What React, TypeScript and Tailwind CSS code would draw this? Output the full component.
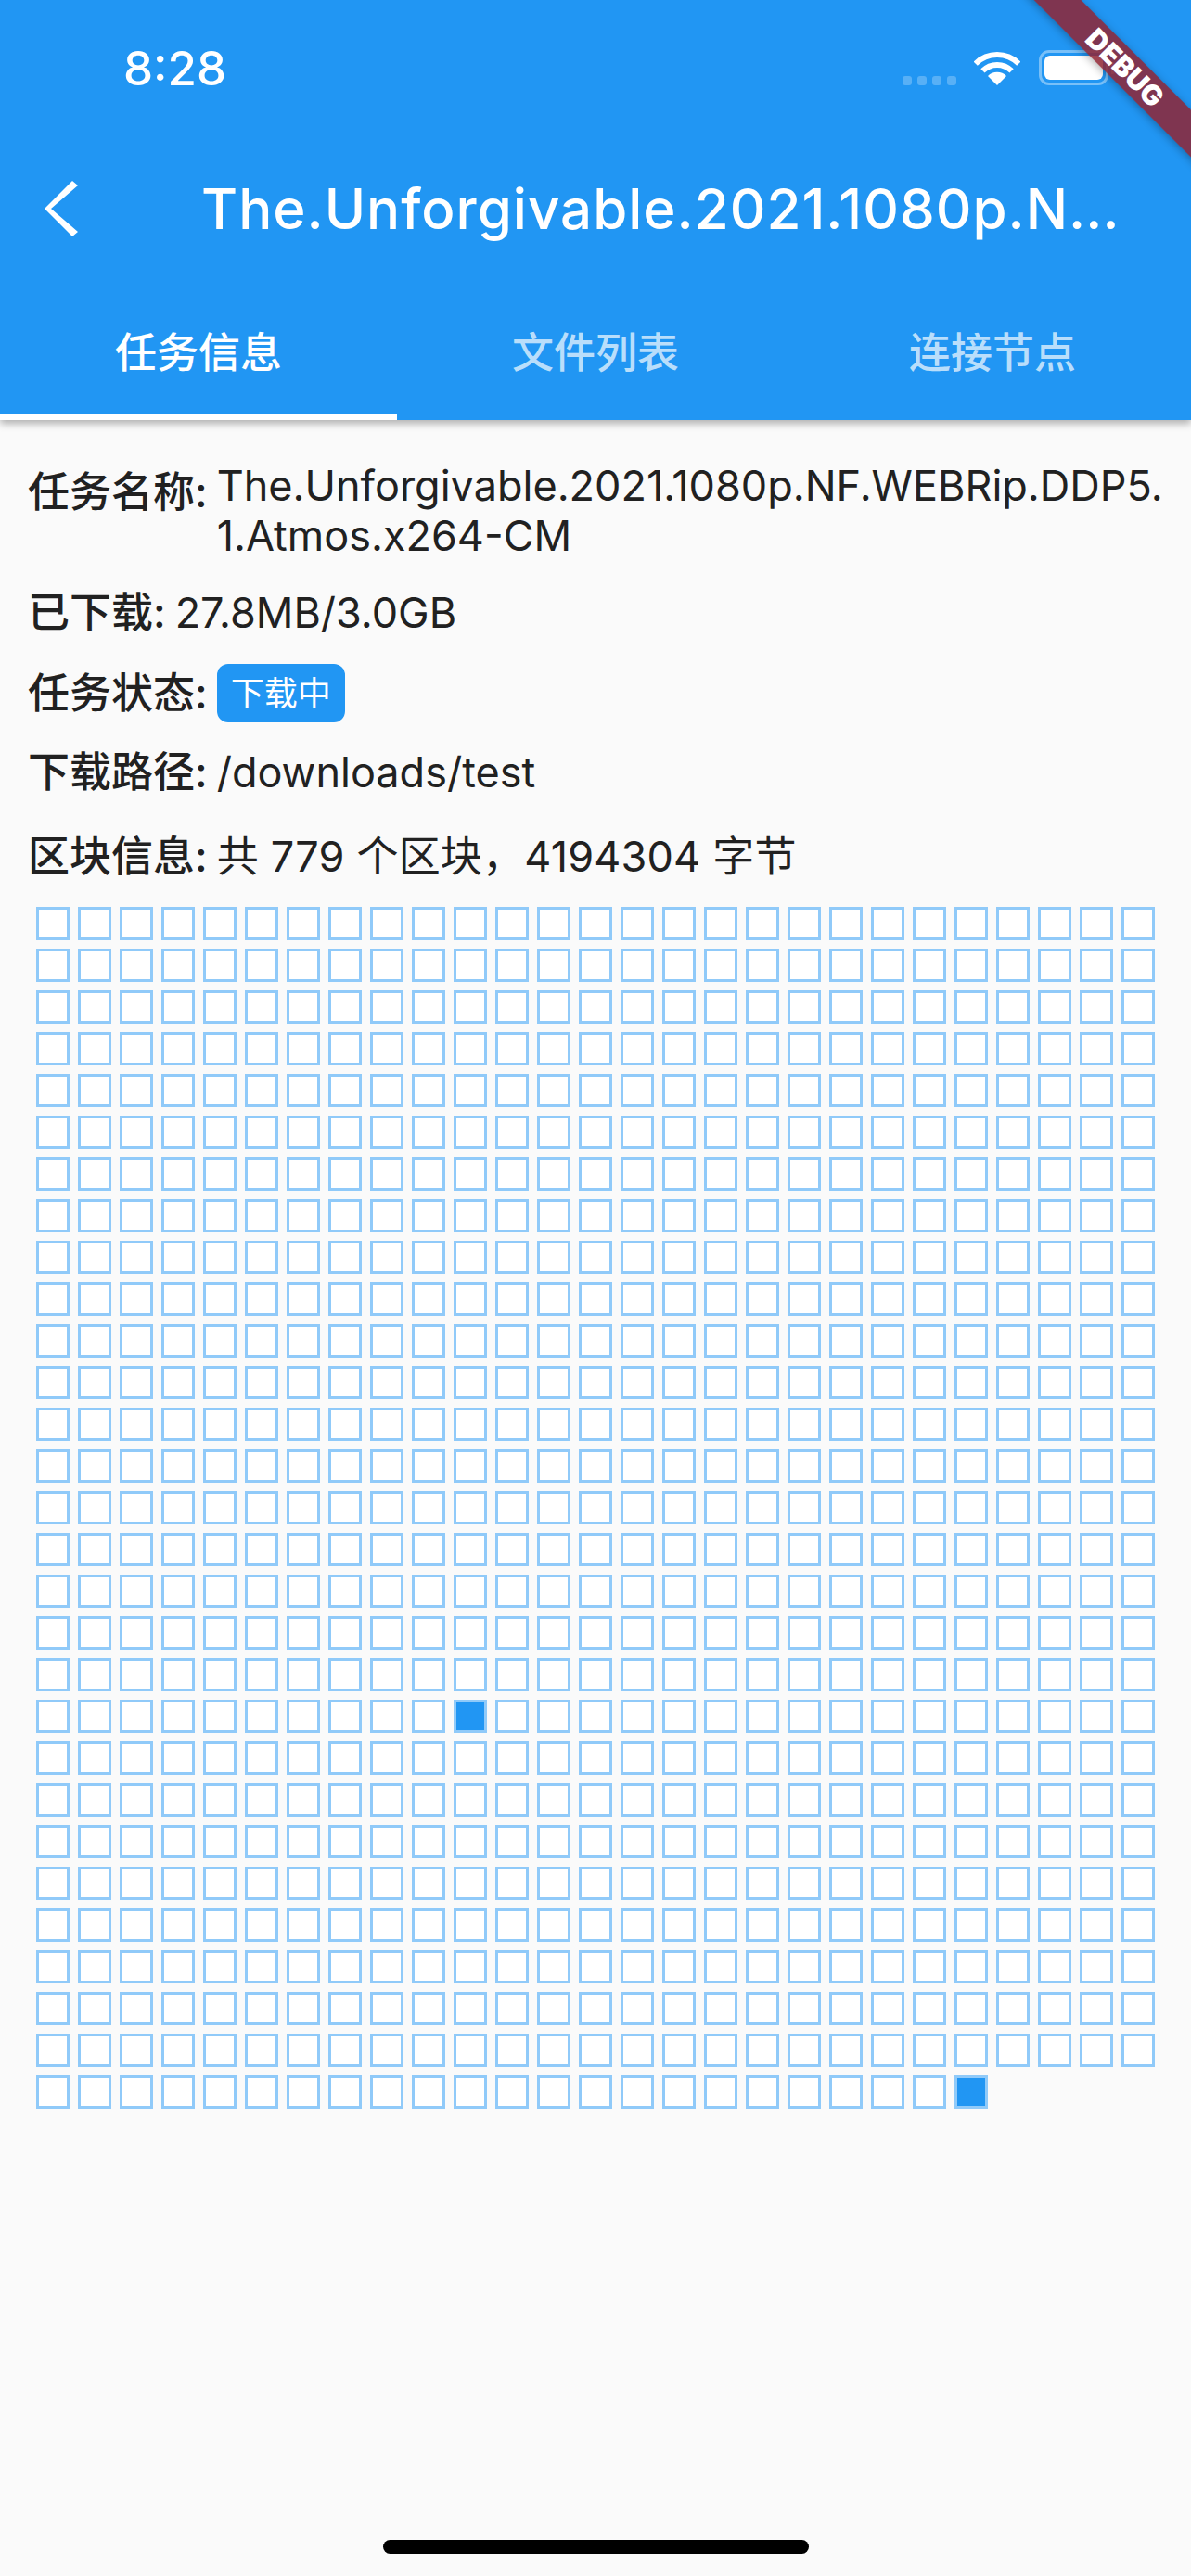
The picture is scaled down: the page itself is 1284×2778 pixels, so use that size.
import React from 'react';

const TITLE = 'The.Unforgivable.2021.1080p.NF.WEBRip.DDP5.1.Atmos.x264-CM';
const TABS = ['任务信息', '文件列表', '连接节点'];
const TOTAL_BLOCKS = 779;
const DONE_BLOCKS = [523, 778];

function WifiIcon() {
  return (
    <svg width="50" height="37" viewBox="0 0 50 37" fill="none" className="ml-[19px]">
      <path d="M25 37 L15 27 A14 14 0 0 1 35 27 Z" fill="#fff" />
      <path d="M9.4 21.4 A22 22 0 0 1 40.6 21.4" stroke="#fff" strokeWidth="6" />
      <path d="M1.7 13.7 A33 33 0 0 1 48.3 13.7" stroke="#fff" strokeWidth="6" />
    </svg>
  );
}

function StatusBar() {
  return (
    <div className="h-[141px] flex items-center pl-[133px] pt-[5px]">
      <span className="text-[51px] leading-none font-medium text-white">8:28</span>
      <div className="ml-auto flex items-center pr-[82px]">
        <div className="flex gap-[6px] mt-[27px]">
          {[0, 1, 2, 3].map((i) => (
            <div key={i} className="w-[10px] h-[10px] rounded-[3px] bg-white/25" />
          ))}
        </div>
        <WifiIcon />
        <div className="ml-[20px] w-[75px] h-[38px] rounded-[11px] border-[3px] border-white/40 p-[3px]">
          <div className="w-full h-full rounded-[6px] bg-white" />
        </div>
        <div className="ml-[3px] w-[4px] h-[13px] rounded-r-[3px] bg-white/40" />
      </div>
    </div>
  );
}

function Header() {
  return (
    <header className="relative z-10 bg-[#2196F3] shadow-[0_4px_8px_rgba(0,0,0,0.3)]">
      <StatusBar />
      <div className="h-[168px] flex items-center pl-[48px]">
        <svg width="36" height="60" viewBox="0 0 36 60" fill="#fff" className="shrink-0">
          <polygon points="30,0 36,5 7,30 36,55 30,60 0,30" />
        </svg>
        <h1 className="ml-[133px] w-[1015px] truncate text-[60px] leading-[80px] tracking-[1px] font-medium text-white">{TITLE}</h1>
      </div>
      <div className="h-[144px] grid grid-cols-3">
        {TABS.map((tab, i) => (
          <div key={tab} className={`flex items-center justify-center text-[45px] font-medium border-b-[6px] pt-[6px] ${i === 0 ? 'text-white border-white' : 'text-white/70 border-transparent'}`}>
            {tab}
          </div>
        ))}
      </div>
    </header>
  );
}

function InfoRow({ label, children, className }: { label: string; children: React.ReactNode; className: string }) {
  return (
    <div className={`flex pl-[30px] pr-[24px] text-[45px] leading-[54px] text-[#212121] ${className}`}>
      <span className="shrink-0 font-medium mr-[10px]">{label}:</span>
      {children}
    </div>
  );
}

function BlockGrid() {
  return (
    <div className="ml-[39px] mt-[27px] grid grid-cols-[repeat(27,36px)] gap-[9px]">
      {Array.from({ length: TOTAL_BLOCKS }).map((_, i) => (
        <div key={i} className={`w-[36px] h-[36px] border-[3px] border-[#90CAF9] ${DONE_BLOCKS.includes(i) ? 'bg-[#2196F3]' : 'bg-white'}`} />
      ))}
    </div>
  );
}

export default function App() {
  return (
    <div className="relative h-[2778px] overflow-hidden flex flex-col bg-[#FAFAFA] font-['Inter','Noto_Sans_CJK_SC',sans-serif]">
      <Header />
      <main className="flex-1 pt-[51px]">
        <InfoRow label="任务名称" className="items-start">
          <span className="break-all -mt-[7px]">{TITLE}</span>
        </InfoRow>
        <InfoRow label="已下载" className="items-start mt-[29px]">
          <span>27.8MB/3.0GB</span>
        </InfoRow>
        <InfoRow label="任务状态" className="items-center mt-[28px]">
          <span className="h-[63px] w-[138px] rounded-[12px] bg-[#2196F3] text-white text-[36px] flex items-center justify-center">下载中</span>
        </InfoRow>
        <InfoRow label="下载路径" className="items-start mt-[27px]">
          <span>/downloads/test</span>
        </InfoRow>
        <InfoRow label="区块信息" className="items-start mt-[37px]">
          <span className="tracking-[0.2px]">共 779 个区块，4194304 字节</span>
        </InfoRow>
        <BlockGrid />
      </main>
      <div className="shrink-0 flex justify-center pb-[24px]">
        <div className="w-[459px] h-[15px] rounded-full bg-black" />
      </div>
      <div className="absolute z-20 top-[-1px] right-[-1px] w-0 h-0">
        <div className="absolute left-[-72px] top-[74px] -translate-x-1/2 -translate-y-1/2 rotate-45 w-[400px] h-[36px] bg-[rgba(143,37,51,0.85)] shadow-[0_2px_10px_rgba(0,0,0,0.3)] flex items-center justify-center text-white text-[30px] leading-none font-black">
          DEBUG
        </div>
      </div>
    </div>
  );
}
